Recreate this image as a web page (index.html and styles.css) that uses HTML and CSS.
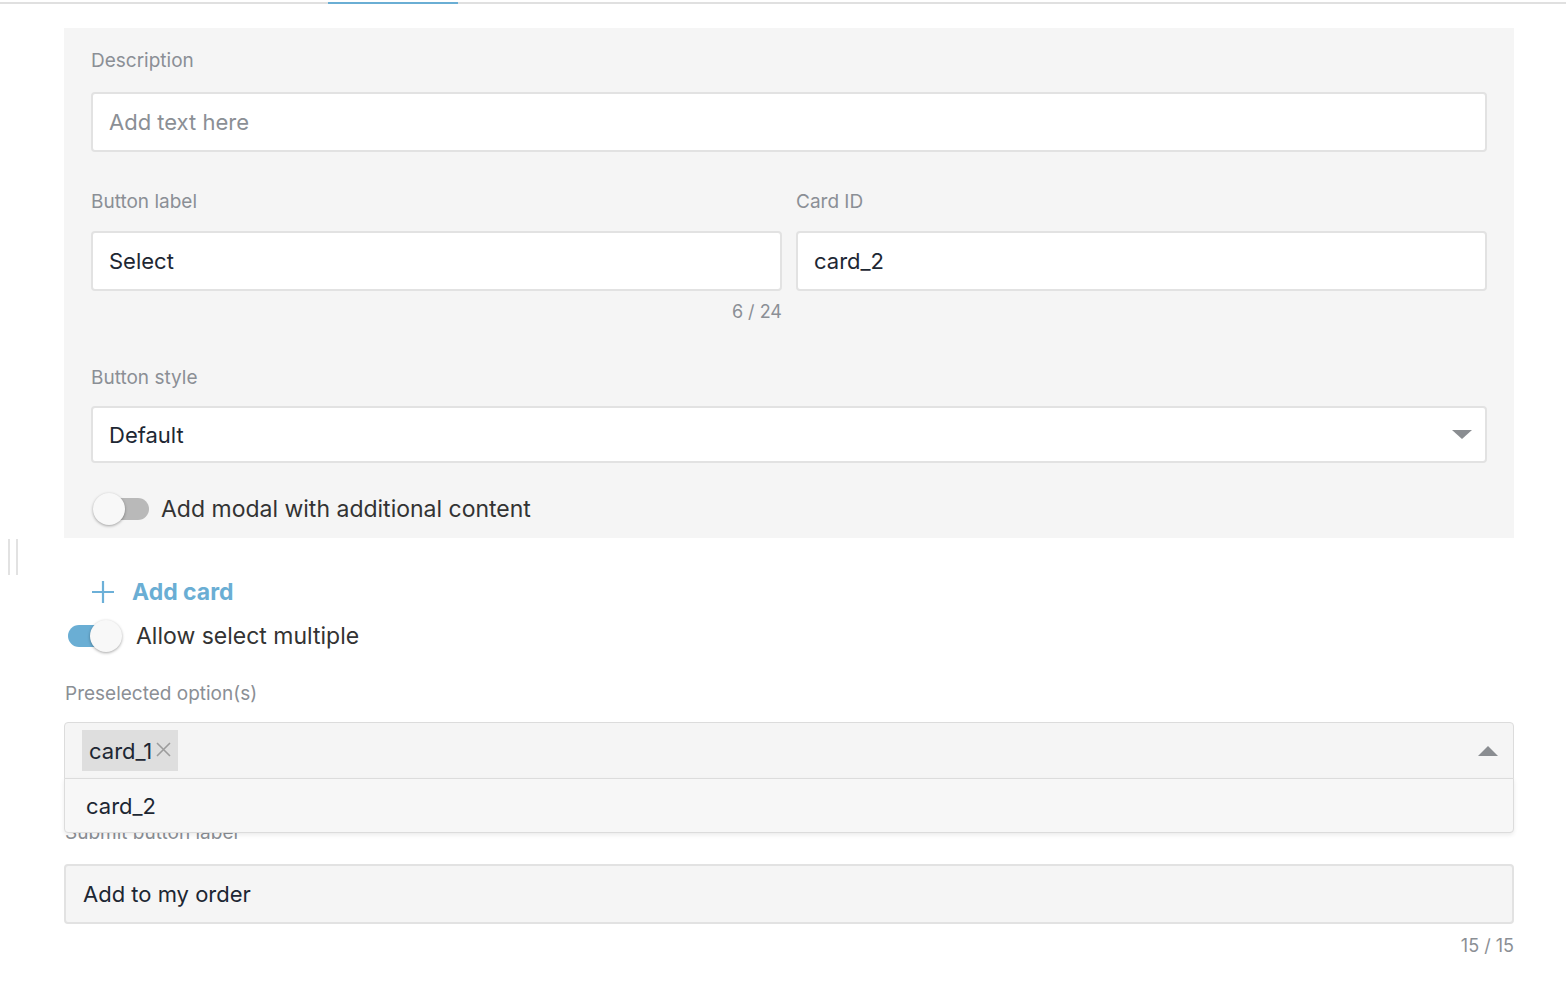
FILE: index.html
```html
<!DOCTYPE html>
<html>
<head>
<meta charset="utf-8">
<link rel="stylesheet" href="styles.css">
</head>
<body>
<div class="tabbar"><div class="tab-active"></div></div>
<div class="grip"><span></span><span></span></div>
<div class="content">
  <div class="panel">
    <label class="label">Description</label>
    <div class="input placeholder">Add text here</div>
    <div class="row">
      <div class="col">
        <label class="label tight">Button label</label>
        <div class="input">Select</div>
        <div class="counter">6 / 24</div>
      </div>
      <div class="col">
        <label class="label tight">Card ID</label>
        <div class="input">card_2</div>
      </div>
    </div>
    <label class="label style-label">Button style</label>
    <div class="input select">Default<span class="caret-down"></span></div>
    <div class="toggle-row off-row">
      <div class="toggle off"><div class="track"></div><div class="thumb"></div></div>
      <span class="toggle-text">Add modal with additional content</span>
    </div>
  </div>

  <div class="add-card">
    <svg width="24" height="24" viewBox="0 0 24 24"><path d="M12 1v22M1 12h22" stroke="#6cb0d8" stroke-width="2.2" fill="none"/></svg>
    <span>Add card</span>
  </div>
  <div class="toggle-row on-row">
    <div class="toggle on"><div class="track"></div><div class="thumb"></div></div>
    <span class="toggle-text">Allow select multiple</span>
  </div>

  <label class="label pre-label">Preselected option(s)</label>
  <div class="multi">
    <div class="multi-box">
      <span class="tag">card_1<svg class="tag-x" width="15" height="15" viewBox="0 0 15 15"><path d="M1 1l13 13M14 1L1 14" stroke="#9c9c9c" stroke-width="1.6" fill="none"/></svg></span>
      <span class="caret-up"></span>
    </div>
    <div class="menu"><div class="menu-item">card_2</div></div>
  </div>

  <label class="label submit-label">Submit button label</label>
  <div class="input grey">Add to my order</div>
  <div class="counter last">15 / 15</div>
</div>
</body>
</html>
```
FILE: styles.css
```css
* { box-sizing: border-box; }
body {
  margin: 0;
  background: #fff;
  font-family: Inter, "Noto Sans", sans-serif;
  color: #1d2733;
  width: 1566px;
  height: 998px;
  overflow: hidden;
  position: relative;
}
.tabbar {
  margin-top: 2px;
  height: 2px;
  background: #e0e0e0;
}
.tab-active {
  margin-left: 328px;
  width: 130px;
  height: 2px;
  background: #6aaed4;
}
.grip {
  position: absolute;
  left: 8px;
  top: 539px;
  display: flex;
  gap: 6px;
}
.grip span {
  width: 2px;
  height: 36px;
  background: #e2e2e2;
}
.content {
  padding: 0 52px 0 64px;
}
.panel {
  margin-top: 24px;
  background: #f5f5f5;
  padding: 22px 27px 13px 27px;
}
.label {
  display: block;
  font-size: 19px;
  line-height: 22px;
  color: #8b8f95;
  margin-bottom: 20px;
}
.label.tight { margin-bottom: 18px; }
.input {
  height: 60px;
  background: #fff;
  border: 2px solid #e2e2e2;
  border-radius: 4px;
  padding: 0 16px;
  display: flex;
  align-items: center;
  font-size: 22px;
  color: #1d2733;
}
.placeholder { color: #8b8f95; }
.row {
  display: flex;
  gap: 14px;
  margin-top: 39px;
}
.col { flex: 1; }
.counter {
  text-align: right;
  font-size: 18px;
  line-height: 22px;
  color: #8b8f95;
  margin-top: 10px;
}
.style-label { margin-top: 44px; margin-bottom: 17px; }
.select {
  height: 57px;
  justify-content: space-between;
  padding-right: 13px;
}
.caret-down {
  width: 0; height: 0;
  border-left: 10px solid transparent;
  border-right: 10px solid transparent;
  border-top: 9px solid #8a8d91;
}
.toggle-row {
  display: flex;
  align-items: center;
}
.off-row { margin-top: 30px; margin-left: 2px; gap: 12px; }
.toggle {
  position: relative;
  width: 56px;
  height: 32px;
  flex: none;
}
.toggle .track {
  position: absolute;
  top: 5px;
  height: 22px;
  border-radius: 11px;
}
.toggle .thumb {
  position: absolute;
  top: 0;
  width: 32px;
  height: 32px;
  border-radius: 50%;
  background: #f8f8f8;
  box-shadow: 0 1px 3px rgba(0,0,0,0.35);
}
.toggle.off .track { left: 2px; right: 0; background: #b9b9b9; }
.toggle.off .thumb { left: 0; }
.toggle.on .track { left: 2px; right: 2px; background: #6aaed4; }
.toggle.on .thumb { right: 0; }
.toggle-text {
  font-size: 23px;
  color: #333;
}
.add-card {
  margin-top: 42px;
  margin-left: 27px;
  display: flex;
  align-items: center;
  gap: 17px;
  color: #6aaed4;
  font-weight: 700;
  font-size: 23px;
  height: 24px;
}
.on-row { margin-top: 16px; margin-left: 2px; gap: 14px; }
.pre-label { margin-top: 31px; margin-left: 1px; margin-bottom: 17px; }
.multi { position: relative; }
.multi-box {
  height: 57px;
  background: #f5f5f5;
  border: 1px solid #dcdcdc;
  border-radius: 4px 4px 0 0;
  padding: 0 15px 0 17px;
  display: flex;
  align-items: center;
  justify-content: space-between;
}
.tag {
  display: inline-flex;
  align-items: center;
  height: 41px;
  padding: 0 7px;
  background: #dedede;
  font-size: 22px;
  color: #1d2733;
}
.tag-x {
  margin-left: 4px;
  margin-top: -2px;
}
.caret-up {
  width: 0; height: 0;
  border-left: 10px solid transparent;
  border-right: 10px solid transparent;
  border-bottom: 10px solid #8a8d91;
}
.menu {
  position: absolute;
  left: 0; right: 0;
  top: 56px;
  background: #f7f7f7;
  border: 1px solid #dcdcdc;
  border-radius: 0 0 4px 4px;
  box-shadow: 0 2px 4px rgba(0,0,0,0.08);
  z-index: 2;
}
.menu-item {
  height: 53px;
  display: flex;
  align-items: center;
  padding-left: 21px;
  font-size: 22px;
  color: #1d2733;
}
.submit-label { margin-top: 43px; margin-left: 1px; }
.grey { background: #f5f5f5; padding-left: 17px; }
.counter.last { margin-top: 11px; }
```
